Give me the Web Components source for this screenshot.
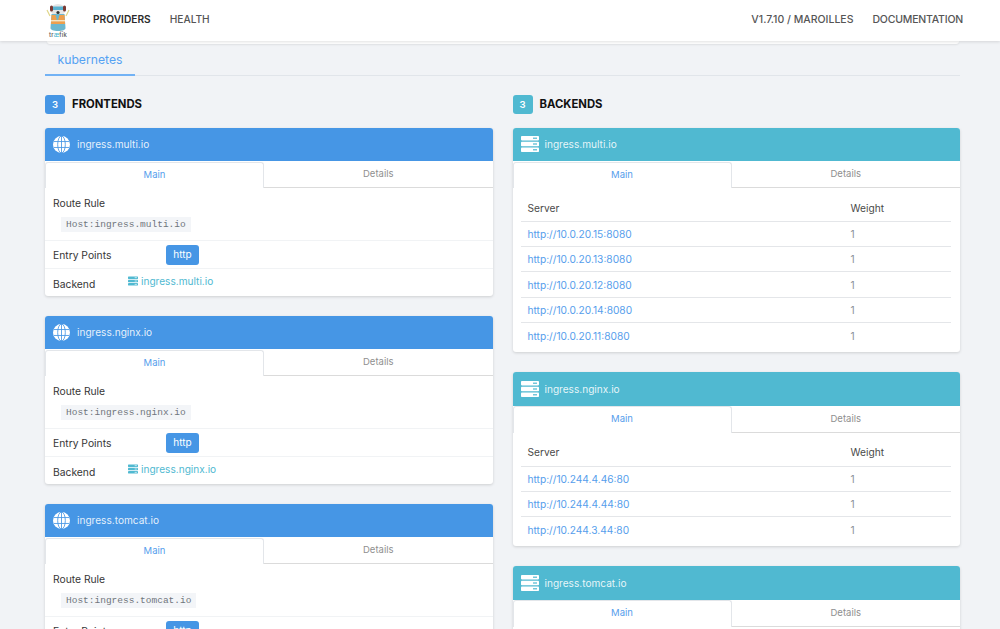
<!DOCTYPE html>
<html lang="en">
<head>
<meta charset="UTF-8">
<title>traefik</title>
<style>
  html, body { margin: 0; height: 629px; overflow: hidden; background: #f1f3f6; }
  body { font-family: Inter, "Liberation Sans", sans-serif; color: #333; }
</style>
</head>
<body>

<template id="globe">
  <svg viewBox="0 0 20 20" width="17" height="17"><circle cx="10" cy="10" r="10" fill="#fff"/><g fill="none" stroke="currentColor" stroke-width="1"><ellipse cx="10" cy="10" rx="4.500" ry="10"/><path d="M10 0v20M1 6.500h18M1 13.500h18"/></g></svg>
</template>

<tf-navbar></tf-navbar>
<tf-page>
  <tf-section slot="left" count="3" kind="frontend" title="FRONTENDS">
    <tf-frontend name="ingress.multi.io"></tf-frontend>
    <tf-frontend name="ingress.nginx.io"></tf-frontend>
    <tf-frontend name="ingress.tomcat.io"></tf-frontend>
  </tf-section>
  <tf-section slot="right" count="3" kind="backend" title="BACKENDS">
    <tf-backend name="ingress.multi.io" servers="http://10.0.20.15:8080,http://10.0.20.13:8080,http://10.0.20.12:8080,http://10.0.20.14:8080,http://10.0.20.11:8080"></tf-backend>
    <tf-backend name="ingress.nginx.io" servers="http://10.244.4.46:80,http://10.244.4.44:80,http://10.244.3.44:80"></tf-backend>
    <tf-backend name="ingress.tomcat.io" servers="http://10.244.4.46:80"></tf-backend>
  </tf-section>
</tf-page>

<script>
  const BLUE = '#4696e5', TEAL = '#50b9d1', LINK = '#569eec';

  const serverIcon = (w, h, fill, hole) => `
    <svg viewBox="0 0 18 16" width="${w}" height="${h}" style="display:block;flex:none">
      <g fill="${fill}">
        <rect x="0" y="0" width="18" height="4.400" rx=".8"/>
        <rect x="0" y="5.800" width="18" height="4.400" rx=".8"/>
        <rect x="0" y="11.600" width="18" height="4.400" rx=".8"/>
      </g>
      <g fill="${hole}">
        <rect x="12" y="1.600" width="4" height="1.200"/>
        <rect x="12" y="7.400" width="4" height="1.200"/>
        <rect x="12" y="13.200" width="4" height="1.200"/>
      </g>
    </svg>`;

  // base class, saves repeating attachShadow everywhere
  class Base extends HTMLElement {
    constructor() {
      super();
      this.attachShadow({ mode: 'open' });
    }
  }

  customElements.define('tf-navbar', class extends Base {
    connectedCallback() {
      this.shadowRoot.innerHTML = `
        <style>
          :host { display: flex; align-items: center; height: 41px; background: #fff; box-shadow: 0 1px 3px rgba(10,10,10,.12); position: relative; z-index: 2; padding: 0 37px 0 46px; font-size: 10.5px; font-weight: 500; color: #555; }
          .logo { width: 24px; height: 36px; margin-right: 23px; display: flex; flex-direction: column; align-items: center; }
          .logo small { font-size: 6px; line-height: 6px; color: #555; letter-spacing: .2px; }
          .logo i { font-style: normal; color: #50b9d1; }
          a { margin-right: 19px; padding-bottom: 3px; }
          a.on { color: #2b2b2b; font-weight: 600; font-size: 10.2px; }
          a.health { font-size: 10.2px; }
          a.docs { letter-spacing: -.2px; }
          .grow { flex: 1; }
          a:last-child { margin-right: 0; }
        </style>
        <div class="logo">
          <svg viewBox="0 0 24 29" width="24" height="29">
            <path d="M4 13 1 7M20 13l3-6" stroke="#e0d78a" stroke-width="1.200"/>
            <ellipse cx="12" cy="7" rx="7.500" ry="6" fill="#e6e6e6"/>
            <rect x="4" y="2.500" width="3" height="6" rx="1.500" fill="#7a3a34"/>
            <rect x="17" y="2.500" width="3" height="6" rx="1.500" fill="#7a3a34"/>
            <path d="M7 3.500h10v3.500H7z" fill="#5bb3d0"/>
            <circle cx="12" cy="9.500" r="1.600" fill="#333"/>
            <path d="M5.500 11h13l1 14c0 2-3 3-7.500 3s-7.500-1-7.500-3z" fill="#6cb7cf"/>
            <path d="M5.500 12h4l2 7 2-7h5l.6 9H5z" fill="#ee9f4d"/>
            <path d="M5 17h14v1.400H5z" fill="#f5e5c4"/>
          </svg>
          <small>tr<i>æ</i>fik</small>
        </div>
        <a class="on">PROVIDERS</a>
        <a class="health">HEALTH</a>
        <span class="grow"></span>
        <a>V1.7.10 / MAROILLES</a>
        <a class="docs">DOCUMENTATION</a>`;
    }
  });

  customElements.define('tf-page', class extends Base {
    connectedCallback() {
      this.shadowRoot.innerHTML = `
        <style>
          :host { display: block; padding: 0 40px 0 45px; }
          .strip { height: 3px; margin-left: 2px; margin-right: 1px; background: #fff; border-radius: 0 0 3px 3px; box-shadow: 0 1px 2px rgba(10,10,10,.08); }
          .tabs { height: 31px; border-bottom: 1px solid #e1e5ea; display: flex; }
          .tab { width: 90px; box-sizing: border-box; height: 32px; border-bottom: 2px solid #72b2f5; color: #55a2f3; font-size: 12.2px; text-align: center; line-height: 31px; }
          .cols { display: grid; grid-template-columns: 447.5px 447.5px; column-gap: 20px; margin-top: 19px; }
        </style>
        <div class="strip"></div>
        <div class="tabs"><div class="tab">kubernetes</div></div>
        <div class="cols">
          <div><slot name="left"></slot></div>
          <div><slot name="right"></slot></div>
        </div>`;
    }
  });

  customElements.define('tf-section', class extends Base {
    connectedCallback() {
      const color = this.getAttribute('kind') === 'backend' ? TEAL : BLUE;
      this.shadowRoot.innerHTML = `
        <style>
          :host { display: block; }
          .head { display: flex; align-items: center; height: 19.300px; margin-bottom: 13.400px; font-size: 11.300px; font-weight: 700; color: #111; }
          .txt { margin-top: -1px; }
          .num { width: 20px; height: 19.300px; border-radius: 3px; background: ${color}; color: #fff; font-size: 9.500px; font-weight: 600; display: flex; align-items: center; justify-content: center; margin-right: 7px; }
          .list { display: flex; flex-direction: column; gap: 20px; }
        </style>
        <div class="head"><span class="num">${this.getAttribute('count')}</span><span class="txt">${this.getAttribute('title')}</span></div>
        <div class="list"><slot></slot></div>`;
    }
  });

  customElements.define('tf-card', class extends Base {
    connectedCallback() {
      const kind = this.getAttribute('kind');
      const color = kind === 'backend' ? TEAL : BLUE;
      const icon = kind === 'backend'
        ? serverIcon(18, 16, '#fff', color)
        : document.getElementById('globe').innerHTML.replace('currentColor', color);
      const gap = kind === 'backend' ? 6 : 7;
      this.shadowRoot.innerHTML = `
        <style>
          :host { display: block; background: #fff; border-radius: 3px; box-shadow: 0 1px 3px rgba(10,10,10,.15); overflow: hidden; }
          .title { height: 33.400px; background: ${color}; color: rgba(255,255,255,.88); display: flex; align-items: center; padding: 0 8px; gap: ${gap}px; font-size: 10.100px; }
          .title span { margin-top: -1px; }
          .title svg { display: block; }
          .tabs { display: grid; grid-template-columns: 219px 1fr; height: 25.600px; font-size: 9.500px; text-align: center; line-height: 26px; }
          .main { color: ${LINK}; border: 1px solid #e3e6ea; border-bottom: 0; border-radius: 3px 3px 0 0; margin-top: .5px; line-height: 24px; }
          .other { color: #8f8f8f; border-bottom: 1px solid #dbdbdb; }
        </style>
        <div class="title">${icon}<span>${this.getAttribute('name')}</span></div>
        <div class="tabs"><div class="main">Main</div><div class="other">Details</div></div>
        <slot></slot>`;
    }
  });

  customElements.define('tf-frontend', class extends Base {
    connectedCallback() {
      const name = this.getAttribute('name');
      this.shadowRoot.innerHTML = `
        <style>
          :host { display: block; }
          .body { font-size: 10.300px; color: #363636; }
          .rule { height: 54px; padding: 9.500px 8px 0; box-sizing: border-box; border-bottom: 1px solid #f1f3f5; line-height: 15px; }
          code { display: inline-block; margin: 5.800px 0 0 8px; padding: 0 5px; height: 15.500px; background: #f3f5f8; color: #70767d; font: 9.500px/16px "Liberation Mono", monospace; }
          .row { display: flex; align-items: center; padding: 0 8px; box-sizing: border-box; border-bottom: 1px solid #f1f3f5; }
          .ep { height: 28.300px; padding-top: 1px; }
          .ep b { font-weight: 400; width: 113px; }
          .btn { width: 33px; height: 20px; border-radius: 3px; background: ${BLUE}; color: #fff; font-size: 10px; text-align: center; line-height: 19px; }
          .be { height: 26.700px; border: 0; }
          .be b { font-weight: 400; width: 75px; padding-top: 3px; }
          .link { color: #50b9d1; display: flex; align-items: center; gap: 3px; margin-top: -3px; font-size: 10.100px; }
        </style>
        <tf-card kind="frontend" name="${name}">
          <div class="body">
            <div class="rule">Route Rule<br><code>Host:${name}</code></div>
            <div class="row ep"><b>Entry Points</b><span class="btn">http</span></div>
            <div class="row be"><b>Backend</b><span class="link">${serverIcon(10, 10, TEAL, '#fff')}${name}</span></div>
          </div>
        </tf-card>`;
    }
  });

  customElements.define('tf-backend', class extends Base {
    connectedCallback() {
      const rows = this.getAttribute('servers').split(',').map(s => `
        <div class="row"><a>${s}</a><span>1</span></div>`).join('');
      this.shadowRoot.innerHTML = `
        <style>
          :host { display: block; }
          .body { padding: 8px 9px 4px 8px; font-size: 10.200px; }
          .row { display: grid; grid-template-columns: 323px 1fr; align-items: center; height: 25.300px; padding-left: 7px; border-bottom: 1px solid #e4e6e9; box-sizing: border-box; color: #8b9098; }
          .row:first-child { height: 27.200px; color: #4a4a4a; }
          .row:last-child { border-bottom: 0; }
          a { color: ${LINK}; }
        </style>
        <tf-card kind="backend" name="${this.getAttribute('name')}">
          <div class="body">
            <div class="row"><span>Server</span><span>Weight</span></div>
            ${rows}
          </div>
        </tf-card>`;
    }
  });
</script>
</body>
</html>
